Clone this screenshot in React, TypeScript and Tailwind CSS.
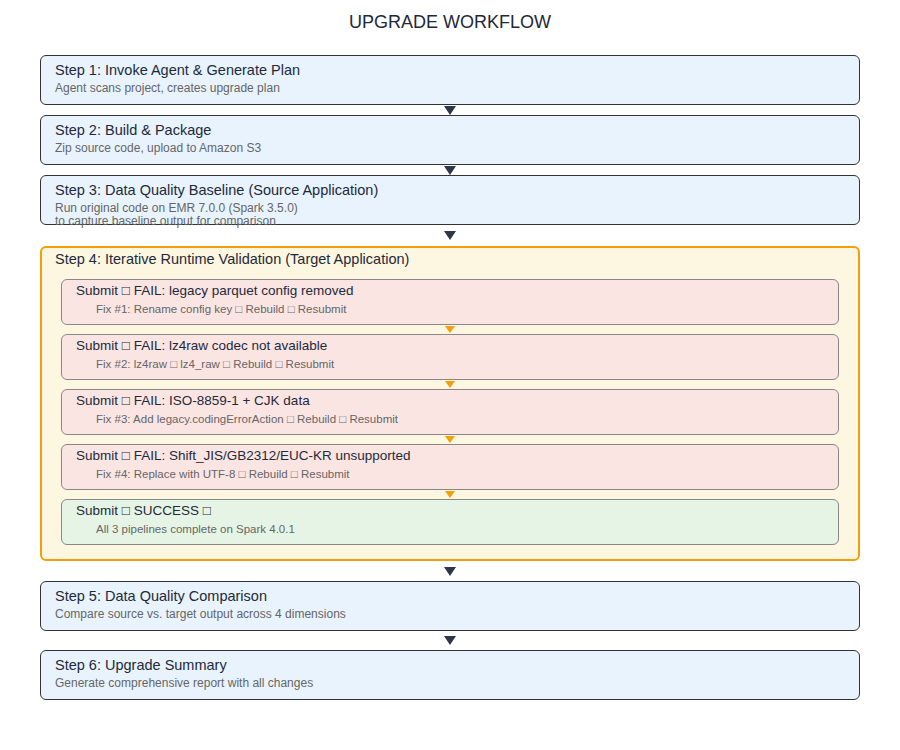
const font = { fontFamily: '"Liberation Sans", Arial, sans-serif' };

function Arrow({ h, color = "border-t-[#2d3748]", small = false }: { h: string; color?: string; small?: boolean }) {
  return (
    <div className={`flex ${h} items-center justify-center`}>
      <div
        className={`h-0 w-0 border-x-transparent ${color} ${
          small ? "border-x-[5px] border-t-[7px]" : "border-x-[6px] border-t-[9px]"
        }`}
      />
    </div>
  );
}

function Step({ title, sub }: { title: string; sub: React.ReactNode }) {
  return (
    <div className="h-[50px] overflow-visible rounded-md border border-[#333] bg-[#e8f3fd] px-[14px] pt-[6px]">
      <div className="text-[14.5px] leading-[17px] text-[#1e2a3a]">{title}</div>
      <div className="mt-[3px] text-[12px] leading-[13px] text-[#666]">{sub}</div>
    </div>
  );
}

function Inner({ title, sub, ok = false }: { title: string; sub: string; ok?: boolean }) {
  return (
    <div
      className={`h-[46px] rounded-md border border-[#888] px-[14px] pt-[3px] ${
        ok ? "bg-[#e6f4e5]" : "bg-[#fbe5e3]"
      }`}
    >
      <div className="text-[13.5px] leading-[16px] text-[#1e2a3a]">{title}</div>
      <div className="mt-[4px] pl-[20px] text-[11.5px] leading-[13px] text-[#666]">{sub}</div>
    </div>
  );
}

export default function App() {
  const fails = [
    ["Submit □ FAIL: legacy parquet config removed", "Fix #1: Rename config key □ Rebuild □ Resubmit"],
    ["Submit □ FAIL: lz4raw codec not available", "Fix #2: lz4raw □ lz4_raw □ Rebuild □ Resubmit"],
    ["Submit □ FAIL: ISO-8859-1 + CJK data", "Fix #3: Add legacy.codingErrorAction □ Rebuild □ Resubmit"],
    ["Submit □ FAIL: Shift_JIS/GB2312/EUC-KR unsupported", "Fix #4: Replace with UTF-8 □ Rebuild □ Resubmit"],
  ];
  return (
    <div className="h-[750px] w-[900px] bg-white px-[40px]" style={font}>
      <h1 className="pt-[12px] pb-[23px] text-center text-[18px] leading-[20px] text-[#1e2a3a]">UPGRADE WORKFLOW</h1>
      <div className="flex flex-col">
        <Step title="Step 1: Invoke Agent & Generate Plan" sub="Agent scans project, creates upgrade plan" />
        <Arrow h="h-[10px]" />
        <Step title="Step 2: Build & Package" sub="Zip source code, upload to Amazon S3" />
        <Arrow h="h-[10px]" />
        <Step
          title="Step 3: Data Quality Baseline (Source Application)"
          sub={
            <>
              Run original code on EMR 7.0.0 (Spark 3.5.0)
              <br />
              to capture baseline output for comparison
            </>
          }
        />
        <Arrow h="h-[21px]" />
        <div className="rounded-md border-2 border-[#f59e0b] bg-[#fdf6e0] px-[19px] pt-[3px] pb-[14px]">
          <div className="-ml-[6px] pb-[11px] text-[14.5px] leading-[17px] text-[#1e2a3a]">
            Step 4: Iterative Runtime Validation (Target Application)
          </div>
          <div className="flex flex-col">
            {fails.map(([t, s]) => (
              <div key={t}>
                <Inner title={t} sub={s} />
                <Arrow h="h-[9px]" color="border-t-[#f59e0b]" small />
              </div>
            ))}
            <Inner title="Submit □ SUCCESS □" sub="All 3 pipelines complete on Spark 4.0.1" ok />
          </div>
        </div>
        <Arrow h="h-[20px]" />
        <Step title="Step 5: Data Quality Comparison" sub="Compare source vs. target output across 4 dimensions" />
        <Arrow h="h-[19px]" />
        <Step title="Step 6: Upgrade Summary" sub="Generate comprehensive report with all changes" />
      </div>
    </div>
  );
}
